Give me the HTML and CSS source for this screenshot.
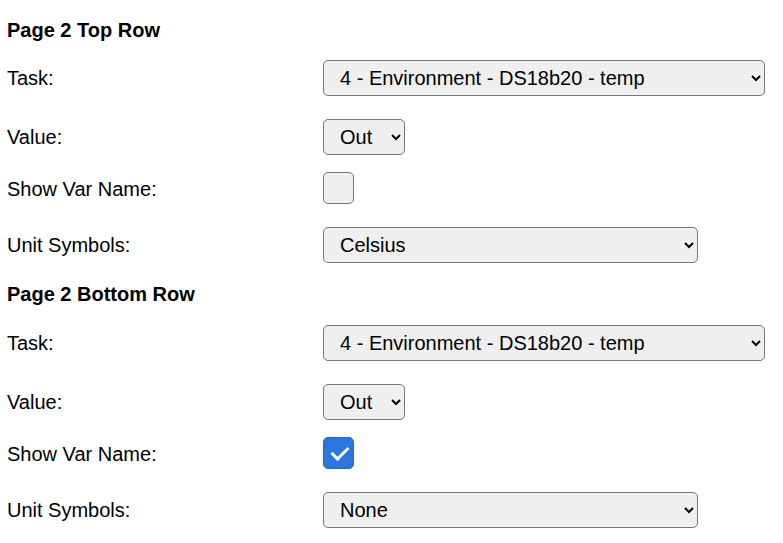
FILE: index.html
```html
<!DOCTYPE html>
<html>
<head>
<meta charset="utf-8">
<link rel="stylesheet" href="styles.css">
</head>
<body>
<section class="group">
  <h3 class="group-title">Page 2 Top Row</h3>
  <div class="row">
    <label class="row-label">Task:</label>
    <select class="ctl ctl-wide"><option>4 - Environment - DS18b20 - temp</option></select>
  </div>
  <div class="row">
    <label class="row-label">Value:</label>
    <select class="ctl ctl-auto"><option>Out</option></select>
  </div>
  <div class="row row-check">
    <label class="row-label">Show Var Name:</label>
    <input type="checkbox" class="check">
  </div>
  <div class="row">
    <label class="row-label">Unit Symbols:</label>
    <select class="ctl ctl-mid"><option>Celsius</option></select>
  </div>
</section>
<section class="group">
  <h3 class="group-title">Page 2 Bottom Row</h3>
  <div class="row">
    <label class="row-label">Task:</label>
    <select class="ctl ctl-wide"><option>4 - Environment - DS18b20 - temp</option></select>
  </div>
  <div class="row">
    <label class="row-label">Value:</label>
    <select class="ctl ctl-auto"><option>Out</option></select>
  </div>
  <div class="row row-check">
    <label class="row-label">Show Var Name:</label>
    <input type="checkbox" class="check" checked>
  </div>
  <div class="row">
    <label class="row-label">Unit Symbols:</label>
    <select class="ctl ctl-mid"><option>None</option></select>
  </div>
</section>
</body>
</html>
```
FILE: styles.css
```css
html, body {
  margin: 0;
  background: #ffffff;
}
body {
  padding: 19px 0 0 7px;
  font-family: "Liberation Sans", Arial, sans-serif;
  font-size: 20px;
  line-height: 23px;
  color: #000;
}
.group + .group {
  margin-top: 9px;
}
.group-title {
  margin: 0 0 7px 0;
  font-size: 20px;
  line-height: 23px;
  font-weight: bold;
}
.group + .group .group-title {
  margin-top: -1px;
  margin-bottom: 8px;
}
.row {
  display: grid;
  grid-template-columns: 316px 1fr;
  align-items: center;
  padding: 11px 0 12px 0;
}
.row-check {
  padding: 5px 0 12px 0;
}
.row-label {
  display: block;
}
.row-check .row-label {
  padding-top: 2px;
}
.ctl {
  font-family: "Liberation Sans", Arial, sans-serif;
  font-size: 20px;
  color: #000;
  height: 36px;
  margin: 0;
  padding: 0 8px 0 12px;
  background-color: #efefef;
  border: 1px solid #767676;
  border-radius: 5px;
  box-sizing: border-box;
}
.ctl-wide {
  width: 442px;
}
.ctl-mid {
  width: 375px;
}
.ctl-auto {
  justify-self: start;
  width: 82px;
}
.check {
  appearance: none;
  -webkit-appearance: none;
  width: 31px;
  height: 32px;
  margin: 0;
  box-sizing: border-box;
  background: #efefef;
  border: 1px solid #767676;
  border-radius: 5px;
  position: relative;
}
.check:checked {
  background: #2b76dc;
  border-color: #2767c0;
}
.check:checked::after {
  content: "";
  position: absolute;
  left: 11px;
  top: 5px;
  width: 7px;
  height: 14px;
  border-right: 3px solid #fff;
  border-bottom: 3px solid #fff;
  transform: rotate(45deg);
}
```
